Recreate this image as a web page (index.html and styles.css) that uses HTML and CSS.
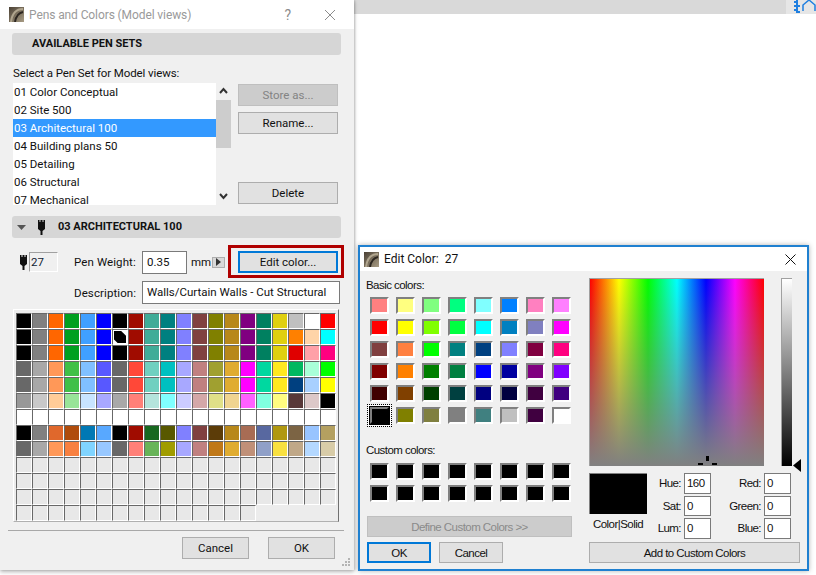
FILE: index.html
```html
<!DOCTYPE html>
<html lang="en">
<head>
<meta charset="utf-8">
<title>Pens and Colors</title>
<link rel="stylesheet" href="styles.css">
</head>
<body>
<div class="topbar"><div class="topbar-end"><svg width="23" height="14" viewBox="0 0 23 14" class="topicon"><path d="M1 2h3M1 6h3M1 10h3M4 0v12h3M4 6h3" fill="none" stroke="#1f7fe0" stroke-width="2"/><path d="M10 11V5l6-5 6 5v6" fill="none" stroke="#1f7fe0" stroke-width="1.5"/></svg></div></div>

<section class="win pens">
  <header class="pens-title">
    <svg class="appicon" width="15" height="15" viewBox="0 0 15 15"><defs><linearGradient id="a" x1="0" y1="0" x2="1" y2="1"><stop offset="0" stop-color="#4a4034"/><stop offset="1" stop-color="#a89c84"/></linearGradient></defs><rect width="15" height="15" fill="url(#a)"/><path d="M2 15C3 7 7 2 14 2" fill="none" stroke="#b0a58e" stroke-width="2"/><path d="M6 15C7 9 9 6 14 5" fill="none" stroke="#2c2620" stroke-width="2"/></svg>
    <span class="pens-title-text">Pens and Colors (Model views)</span>
    <span class="help">?</span>
    <svg class="close" width="12" height="12" viewBox="0 0 12 12"><path d="M1 1l10 10M11 1L1 11" stroke="#8c8c8c" stroke-width="1" fill="none"/></svg>
  </header>
  <div class="pens-body">
    <div class="band"><span class="band-text">AVAILABLE PEN SETS</span></div>
    <div class="select-label">Select a Pen Set for Model views:</div>
    <div class="list-row">
      <div class="list">
        <div class="item">01 Color Conceptual</div>
        <div class="item">02 Site 500</div>
        <div class="item selected">03 Architectural 100</div>
        <div class="item">04 Building plans 50</div>
        <div class="item">05 Detailing</div>
        <div class="item">06 Structural</div>
        <div class="item">07 Mechanical</div>
      </div>
      <div class="scroll">
        <svg class="scroll-arrow" width="15" height="17" viewBox="0 0 15 17"><path d="M4 10l3.5-4 3.5 4" fill="none" stroke="#333" stroke-width="2"/></svg>
        <div class="thumb"></div>
        <svg class="scroll-arrow bottom" width="15" height="17" viewBox="0 0 15 17"><path d="M4 6l3.5 4 3.5-4" fill="none" stroke="#333" stroke-width="2"/></svg>
      </div>
      <div class="list-actions">
        <button class="btn btn-wide disabled">Store as...</button>
        <button class="btn btn-wide">Rename...</button>
        <button class="btn btn-wide push">Delete</button>
      </div>
    </div>
    <div class="band band2">
      <svg class="tri" width="9" height="5" viewBox="0 0 9 5"><path d="M0 0h9L4.500 5z" fill="#555"/></svg>
      <svg class="pen" width="7" height="15" viewBox="0 0 7 15"><path d="M0 0h1.500v2H2.500V0h2v2H5.500V0H7v9L4.500 11v4h-2v-4L0 9z" fill="#111"/></svg>
      <span class="band-text2">03 ARCHITECTURAL 100</span>
    </div>
    <div class="weight-row">
      <svg class="pen pen-small" width="7" height="15" viewBox="0 0 7 15"><path d="M0 0h1.500v2H2.500V0h2v2H5.500V0H7v9L4.500 11v4h-2v-4L0 9z" fill="#111"/></svg>
      <span class="pen-num">27</span>
      <span class="weight-label">Pen Weight:</span>
      <span class="field weight-field">0.35</span>
      <span class="mm">mm</span>
      <span class="mini"><svg width="5" height="8" viewBox="0 0 5 8"><path d="M0 0l5 4-5 4z" fill="#333"/></svg></span>
      <span class="edit-wrap"><button class="btn btn-wide focus">Edit color...</button></span>
    </div>
    <div class="desc-row">
      <span class="desc-label">Description:</span>
      <span class="field desc-field">Walls/Curtain Walls - Cut Structural</span>
    </div>
    <div class="palette">
      <i style="background:#000"></i><i style="background:#808080"></i><i style="background:#ff6600"></i><i style="background:#00a020"></i><i style="background:#40a0ff"></i><i style="background:#0000ff"></i><i style="background:#000"></i><i style="background:#a00c00"></i><i style="background:#40ac98"></i><i style="background:#008080"></i><i style="background:#8080ff"></i><i style="background:#804040"></i><i style="background:#808000"></i><i style="background:#b8881a"></i><i style="background:#800080"></i><i style="background:#008060"></i><i style="background:#e0d010"></i><i style="background:#c0c0c0"></i><i style="background:#fff"></i><i style="background:#f00"></i>
      <i style="background:#000"></i><i style="background:#808080"></i><i style="background:#ff6600"></i><i style="background:#00a020"></i><i style="background:#40a0ff"></i><i style="background:#0000ff"></i><i class="current"></i><i style="background:#a00c00"></i><i style="background:#40ac98"></i><i style="background:#008080"></i><i style="background:#8080ff"></i><i style="background:#804040"></i><i style="background:#808000"></i><i style="background:#b8881a"></i><i style="background:#800080"></i><i style="background:#008060"></i><i style="background:#e0d010"></i><i style="background:#ff8000"></i><i style="background:#ffd4a8"></i><i style="background:#0ff"></i>
      <i style="background:#000"></i><i style="background:#808080"></i><i style="background:#ff6600"></i><i style="background:#00a020"></i><i style="background:#40a0ff"></i><i style="background:#0000ff"></i><i style="background:#000"></i><i style="background:#a00c00"></i><i style="background:#40ac98"></i><i style="background:#008080"></i><i style="background:#8080ff"></i><i style="background:#804040"></i><i style="background:#808000"></i><i style="background:#b8881a"></i><i style="background:#800080"></i><i style="background:#008060"></i><i style="background:#e0d010"></i><i style="background:#e00000"></i><i style="background:#ffa0a8"></i><i style="background:#ff0080"></i>
      <i style="background:#686868"></i><i style="background:#a8a8a8"></i><i style="background:#ff9858"></i><i style="background:#40c048"></i><i style="background:#80c0ff"></i><i style="background:#5858ff"></i><i style="background:#686868"></i><i style="background:#ff4838"></i><i style="background:#70d0c0"></i><i style="background:#00c0c0"></i><i style="background:#a8a8ff"></i><i style="background:#c08080"></i><i style="background:#a0a030"></i><i style="background:#e0ac30"></i><i style="background:#ff00ff"></i><i style="background:#00d8a0"></i><i style="background:#ffe820"></i><i style="background:#00b860"></i><i style="background:#a8ffd8"></i><i style="background:#0f0"></i>
      <i style="background:#686868"></i><i style="background:#a8a8a8"></i><i style="background:#ff9858"></i><i style="background:#40c048"></i><i style="background:#80c0ff"></i><i style="background:#5858ff"></i><i style="background:#686868"></i><i style="background:#ff4838"></i><i style="background:#70d0c0"></i><i style="background:#00c0c0"></i><i style="background:#a8a8ff"></i><i style="background:#c08080"></i><i style="background:#a0a030"></i><i style="background:#e0ac30"></i><i style="background:#ff00ff"></i><i style="background:#00d8a0"></i><i style="background:#ffe820"></i><i style="background:#004080"></i><i style="background:#a8d0ff"></i><i style="background:#ff0"></i>
      <i style="background:#989898"></i><i style="background:#c8c8c8"></i><i style="background:#ffcc98"></i><i style="background:#98e498"></i><i style="background:#c8e4ff"></i><i style="background:#a8a8ff"></i><i style="background:#a8a8a8"></i><i style="background:#ff8078"></i><i style="background:#b4e4dc"></i><i style="background:#80ffff"></i><i style="background:#ccccff"></i><i style="background:#d4a8a8"></i><i style="background:#e0e088"></i><i style="background:#f0d490"></i><i style="background:#ff60ff"></i><i style="background:#80ffe0"></i><i style="background:#fffc80"></i><i style="background:#583838"></i><i style="background:#dcc8c8"></i><i style="background:#000"></i>
      <i class="w"></i><i class="w"></i><i class="w"></i><i class="w"></i><i class="w"></i><i class="w"></i><i class="w"></i><i class="w"></i><i class="w"></i><i class="w"></i><i class="w"></i><i class="w"></i><i class="w"></i><i class="w"></i><i class="w"></i><i class="w"></i><i class="w"></i><i class="w"></i><i class="w"></i><i class="w"></i>
      <i style="background:#000"></i><i style="background:#808080"></i><i style="background:#e0682c"></i><i style="background:#b04c0c"></i><i style="background:#0078b4"></i><i style="background:#58a8ff"></i><i style="background:#000"></i><i style="background:#a00c00"></i><i style="background:#186820"></i><i style="background:#585800"></i><i style="background:#8080ff"></i><i style="background:#804040"></i><i style="background:#5c3c08"></i><i style="background:#b8881a"></i><i style="background:#a86c54"></i><i style="background:#5868a0"></i><i style="background:#b09810"></i><i style="background:#7c6444"></i><i style="background:#98c4ff"></i><i style="background:#b4a060"></i>
      <i style="background:#686868"></i><i style="background:#a8a8a8"></i><i style="background:#ff9858"></i><i style="background:#f88040"></i><i style="background:#80d4ff"></i><i style="background:#98c8ff"></i><i style="background:#686868"></i><i style="background:#ff8078"></i><i style="background:#68b458"></i><i style="background:#a09c00"></i><i style="background:#a8a8ff"></i><i style="background:#c08080"></i><i style="background:#c07818"></i><i style="background:#e0ac30"></i><i style="background:#c09078"></i><i style="background:#90a0c8"></i><i style="background:#f8e040"></i><i style="background:#c0a888"></i><i style="background:#b4d8ff"></i><i style="background:#d8cca8"></i>
      <i></i><i></i><i></i><i></i><i></i><i></i><i></i><i></i><i></i><i></i><i></i><i></i><i></i><i></i><i></i><i></i><i></i><i></i><i></i><i></i>
      <i></i><i></i><i></i><i></i><i></i><i></i><i></i><i></i><i></i><i></i><i></i><i></i><i></i><i></i><i></i><i></i><i></i><i></i><i></i><i></i>
      <i></i><i></i><i></i><i></i><i></i><i></i><i></i><i></i><i></i><i></i><i></i><i></i><i></i><i></i><i></i><i></i><i></i><i></i><i></i><i></i>
      <i></i><i></i><i></i><i></i><i></i><i></i><i></i><i></i><i></i><i></i><i></i><i></i><i></i><i></i><i></i>
    </div>
    <div class="divider"></div>
    <div class="footer">
      <button class="btn btn-foot">Cancel</button>
      <button class="btn btn-foot">OK</button>
    </div>
  </div>
  <svg class="grip" width="8" height="8" viewBox="0 0 8 8"><path d="M6 0h2v2H6zM3 3h2v2H3zM6 3h2v2H6zM0 6h2v2H0zM3 6h2v2H3zM6 6h2v2H6z" fill="#b4b4b4"/></svg>
</section>

<section class="win edit">
  <header class="edit-title">
    <svg class="appicon" width="15" height="15" viewBox="0 0 15 15"><defs><linearGradient id="b" x1="0" y1="0" x2="1" y2="1"><stop offset="0" stop-color="#4a4034"/><stop offset="1" stop-color="#a89c84"/></linearGradient></defs><rect width="15" height="15" fill="url(#b)"/><path d="M2 15C3 7 7 2 14 2" fill="none" stroke="#b0a58e" stroke-width="2"/><path d="M6 15C7 9 9 6 14 5" fill="none" stroke="#2c2620" stroke-width="2"/></svg>
    <span class="edit-title-text">Edit Color:&nbsp; 27</span>
    <svg class="edit-close" width="11" height="11" viewBox="0 0 11 11"><path d="M.5.500l10 10M10.500.500l-10 10" stroke="#111" stroke-width="1" fill="none"/></svg>
  </header>
  <div class="edit-body">
    <div class="edit-left">
      <div class="cc-label">Basic colors:</div>
      <div class="swatches">
        <b style="background:#ff8080"></b><b style="background:#ffff80"></b><b style="background:#80ff80"></b><b style="background:#00ff80"></b><b style="background:#80ffff"></b><b style="background:#0080ff"></b><b style="background:#ff80c0"></b><b style="background:#ff80ff"></b>
        <b style="background:#ff0000"></b><b style="background:#ffff00"></b><b style="background:#80ff00"></b><b style="background:#00ff40"></b><b style="background:#00ffff"></b><b style="background:#0080c0"></b><b style="background:#8080c0"></b><b style="background:#ff00ff"></b>
        <b style="background:#804040"></b><b style="background:#ff8040"></b><b style="background:#00ff00"></b><b style="background:#008080"></b><b style="background:#004080"></b><b style="background:#8080ff"></b><b style="background:#800040"></b><b style="background:#ff0080"></b>
        <b style="background:#800000"></b><b style="background:#ff8000"></b><b style="background:#008000"></b><b style="background:#008040"></b><b style="background:#0000ff"></b><b style="background:#0000a0"></b><b style="background:#800080"></b><b style="background:#8000ff"></b>
        <b style="background:#400000"></b><b style="background:#804000"></b><b style="background:#004000"></b><b style="background:#004040"></b><b style="background:#000080"></b><b style="background:#000040"></b><b style="background:#400040"></b><b style="background:#400080"></b>
        <b class="chosen" style="background:#000"></b><b style="background:#808000"></b><b style="background:#808040"></b><b style="background:#808080"></b><b style="background:#408080"></b><b style="background:#c0c0c0"></b><b style="background:#400040"></b><b style="background:#fff"></b>
      </div>
      <div class="cc-label custom-label">Custom colors:</div>
      <div class="swatches custom-swatches">
        <b class="k"></b><b class="k"></b><b class="k"></b><b class="k"></b><b class="k"></b><b class="k"></b><b class="k"></b><b class="k"></b>
        <b class="k"></b><b class="k"></b><b class="k"></b><b class="k"></b><b class="k"></b><b class="k"></b><b class="k"></b><b class="k"></b>
      </div>
      <button class="cbtn define" disabled>Define Custom Colors &gt;&gt;</button>
      <div class="edit-actions">
        <button class="cbtn small default">OK</button>
        <button class="cbtn small">Cancel</button>
      </div>
    </div>
    <div class="edit-right">
      <div class="pick-row">
        <div class="spectrum"><span class="cross c1"></span><span class="cross c2"></span><span class="cross c3"></span></div>
        <div class="lum"></div>
        <svg class="lum-arrow" width="8" height="13" viewBox="0 0 8 13"><path d="M8 0v13L0 6.500z" fill="#000"/></svg>
      </div>
      <div class="value-row">
        <div class="preview-col">
          <div class="preview"></div>
          <div class="preview-label">Color|Solid</div>
        </div>
        <div class="values">
          <span class="vl">Hue:</span><span class="vf">160</span><span class="vl">Red:</span><span class="vf">0</span>
          <span class="vl">Sat:</span><span class="vf">0</span><span class="vl">Green:</span><span class="vf">0</span>
          <span class="vl">Lum:</span><span class="vf">0</span><span class="vl">Blue:</span><span class="vf">0</span>
        </div>
      </div>
      <button class="cbtn add">Add to Custom Colors</button>
    </div>
  </div>
</section>
</body>
</html>
```
FILE: styles.css
```css
* { box-sizing: border-box; }
html, body { margin: 0; padding: 0; }
body {
  width: 816px; height: 575px; overflow: hidden; position: relative;
  background: #fff; color: #111;
  font: 11.500px/16px Roboto, sans-serif;
}
button { font: inherit; color: inherit; padding: 0; margin: 0; }

.topbar { height: 14px; margin-left: 354px; background: #d9d9d9; display: flex; justify-content: flex-end; }
.topbar-end { width: 30px; background: #e6e6e6; overflow: hidden; padding-left: 7px; }
.topicon { display: block; }

.win { position: absolute; }

/* Pens window */
.pens {
  left: 0; top: 0; width: 354px; height: 570px; background: #f0f0f0;
  box-shadow: 0 2px 4px rgba(0,0,0,.28), 1px 0 2px rgba(0,0,0,.15);
}
.pens-title { height: 29px; background: #fff; display: flex; align-items: center; padding-left: 9px; }
.appicon { display: block; flex: none; }
.pens-title-text { margin-left: 5px; font-size: 12px; letter-spacing: -.1px; color: #9a9a9a; flex: 1; }
.help { color: #8c8c8c; font-size: 14px; margin-right: 33px; }
.close { margin-right: 18px; }
.pens-body { padding: 4px 13px 0 12px; }

.band { height: 22px; width: 329px; background: #d6d6d6; border-radius: 3px; display: flex; align-items: center; }
.band-text { margin-left: 20px; font-weight: 700; font-size: 11px; color: #111; }
.select-label { margin: 10px 0 0 1px; height: 18px; line-height: 16px; letter-spacing: -.1px; }
.list-row { display: flex; height: 122px; margin-left: 1px; }
.list { width: 203px; background: #fff; overflow: hidden; }
.item { height: 18px; line-height: 18px; padding-left: 1px; }
.item.selected { background: #3399ff; color: #fff; }
.scroll { width: 15px; position: relative; display: flex; flex-direction: column; }
.scroll-arrow { display: block; }
.thumb { height: 48px; background: #cdcdcd; }
.scroll-arrow.bottom { margin-top: auto; }
.list-actions { margin-left: 7px; display: flex; flex-direction: column; gap: 6px; padding: 1px 0; }
.push { margin-top: auto; }

.btn { background: #e1e1e1; border: 1px solid #adadad; text-align: center; }
.btn-wide { width: 100px; height: 22px; line-height: 19px; }
.disabled { background: #cccccc; border-color: #bfbfbf; color: #838383; }
.focus { border: 2px solid #0078d7; line-height: 17px; }

.band2 { margin-top: 11px; padding-left: 5px; }
.tri { display: block; margin-right: 12px; }
.pen { display: block; }
.band-text2 { margin-left: 13px; font-weight: 700; font-size: 11px; }

.weight-row { display: flex; align-items: center; height: 22px; margin-top: 13px; position: relative; }
.pen-small { margin-left: 8px; margin-right: 1px; flex: none; }
.pen-num { width: 29px; height: 20px; margin-left: 1px; padding-left: 1px; line-height: 19px; border: 1px solid; border-color: #a0a0a0 #fff #fff #a0a0a0; color: #123; }
.weight-label { margin-left: 16px; width: 68px; letter-spacing: .1px; }
.field { background: #fff; border: 1px solid #7a7a7a; padding-left: 4px; display: block; }
.weight-field { width: 45px; height: 23px; line-height: 21px; }
.mm { margin-left: 4px; width: 21px; }
.mini { width: 13px; height: 11px; background: #d8d8d8; border: 1px solid #adadad; display: flex; align-items: center; justify-content: center; }
.edit-wrap { position: absolute; left: 216px; top: -6px; width: 116px; height: 33px; border: 3px solid #b00000; padding: 3px 7px; display: block; }
.desc-row { display: flex; align-items: center; height: 23px; margin-top: 8px; }
.desc-label { margin-left: 62px; width: 68px; letter-spacing: .1px; }
.desc-field { width: 198px; height: 23px; line-height: 21px; }

.palette {
  margin: 5px 0 0 1px; width: 326px; height: 213px; padding: 3px 2px;
  background: #ececec; border: 1px solid; border-color: #fff #707070 #b0b0b0 #fff;
  display: grid; grid-template-columns: repeat(20, 16px); grid-auto-rows: 16px; align-content: start;
}
.palette i { display: block; background: #e8e8e8; border: 1px solid; border-color: #686868 #fff #fff #686868; }
.palette i.w { background: #fff; }
.palette i.current { background: #fff; position: relative; }
.palette i.current::after { content: ""; position: absolute; left: 1px; top: 1px; width: 12px; height: 12px; background: #000; clip-path: polygon(0 0, 60% 0, 100% 40%, 100% 100%, 30% 100%, 0 70%); }

.divider { height: 1px; margin: 8px 0 0 -4px; width: 336px; background: #a8a8a8; }
.footer { display: flex; gap: 19px; margin: 6px 0 0 170px; }
.btn-foot { width: 67px; height: 22px; line-height: 19px; }
.grip { position: absolute; left: 342px; top: 558px; }

/* Edit color window */
.edit {
  left: 358px; top: 245px; width: 451px; height: 326px; background: #f0f0f0;
  border: 2px solid #1f80d0; box-shadow: 0 0 5px rgba(0,0,0,.3);
}
.edit-title { height: 24px; background: #fff; display: flex; align-items: center; padding-left: 4px; }
.edit-title-text { margin-left: 5px; flex: 1; font-size: 12px; }
.edit-close { margin-right: 11px; }
.edit-body { display: flex; font-family: "Liberation Sans", sans-serif; font-size: 11.500px; letter-spacing: -.55px; }
.edit-left { width: 229px; padding: 6px 0 0 6px; }
.cc-label { height: 16px; line-height: 16px; }
.swatches { display: grid; grid-template-columns: repeat(8, 26px); grid-auto-rows: 22px; margin: 4px 0 0 4px; }
.swatches b { display: block; width: 19px; height: 17px; border: 2px solid; border-color: #808080 #fff #fff #808080; }
.swatches b.k { background: #000; }
.swatches b.chosen { outline: 1px dotted #000; outline-offset: 2px; border-color: #808080 #000 #000 #808080; box-shadow: 0 0 0 1px #000, 0 0 0 2px #fff; }
.custom-label { margin-top: 13px; }
.custom-swatches { margin-top: 5px; }
.cbtn { display: block; background: #e1e1e1; border: 1px solid #adadad; text-align: center; font: inherit; letter-spacing: inherit; }
.define { width: 205px; height: 21px; margin: 9px 0 0 1px; background: #cccccc; border-color: #bfbfbf; color: #8a8a8a; }
.edit-actions { display: flex; gap: 8px; margin: 5px 0 0 1px; }
.small { width: 64px; height: 21px; }
.default { border: 2px solid #0078d7; }

.edit-right { width: 218px; padding: 7px 0 0 0; }
.pick-row { display: flex; height: 188px; position: relative; }
.spectrum {
  width: 175px; position: relative; border-top: 1px solid #a0a0a0; border-left: 1px solid #a0a0a0;
  background: linear-gradient(transparent, #808080), linear-gradient(90deg, #f00, #ff0 16.67%, #0f0 33.33%, #0ff 50%, #00f 66.67%, #f0f 83.33%, #f00);
}
.cross { position: absolute; background: #000; }
.c1 { left: 116px; top: 177px; width: 3px; height: 5px; }
.c2 { left: 108px; top: 184px; width: 5px; height: 2px; }
.c3 { left: 122px; top: 184px; width: 5px; height: 2px; }
.lum { width: 11px; margin-left: 17px; border-top: 1px solid #a0a0a0; border-left: 1px solid #a0a0a0; background: linear-gradient(#fff, #000); }
.lum-arrow { position: absolute; left: 204px; bottom: -6px; }
.value-row { display: flex; margin-top: 7px; height: 65px; }
.preview-col { width: 58px; }
.preview { height: 41px; background: #000; border-top: 1px solid #808080; border-left: 1px solid #808080; }
.preview-label { text-align: center; margin-top: 2px; }
.values { display: grid; grid-template-columns: 33px 27px 47px 27px; column-gap: 3px; row-gap: 2px; grid-auto-rows: 20.500px; margin-left: 1px; flex: none; width: 146px; }
.vl { text-align: right; line-height: 20px; }
.vf { background: #fff; border: 1px solid #7a7a7a; padding-left: 2px; line-height: 18px; }
.add { width: 211px; height: 21px; margin-top: 4px; }
```
